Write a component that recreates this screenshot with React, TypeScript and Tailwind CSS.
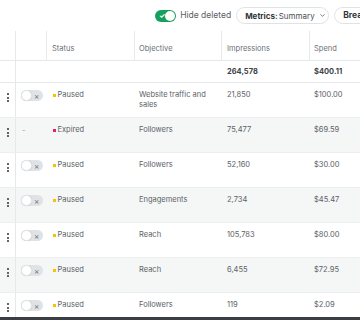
import { ChevronDown } from "lucide-react";

type Row = {
  status: "Paused" | "Expired";
  objective: string;
  impressions: string;
  spend: string;
};

const rows: Row[] = [
  { status: "Paused", objective: "Website traffic and sales", impressions: "21,850", spend: "$100.00" },
  { status: "Expired", objective: "Followers", impressions: "75,477", spend: "$69.59" },
  { status: "Paused", objective: "Followers", impressions: "52,160", spend: "$30.00" },
  { status: "Paused", objective: "Engagements", impressions: "2,734", spend: "$45.47" },
  { status: "Paused", objective: "Reach", impressions: "105,783", spend: "$80.00" },
  { status: "Paused", objective: "Reach", impressions: "6,455", spend: "$72.95" },
  { status: "Paused", objective: "Followers", impressions: "119", spend: "$2.09" },
];

const cols = "grid grid-cols-[16px_31px_88px_87px_88px_110px]";

function Kebab() {
  return (
    <div className="flex flex-col items-center gap-[1.5px] pt-[2px]">
      <span className="w-[2px] h-[2px] rounded-full bg-[#2f3336]" />
      <span className="w-[2px] h-[2px] rounded-full bg-[#2f3336]" />
      <span className="w-[2px] h-[2px] rounded-full bg-[#2f3336]" />
    </div>
  );
}

function OffToggle() {
  return (
    <div className="relative w-[22px] h-[11px] rounded-full bg-[#dfe3e6] flex items-center">
      <span className="w-[11px] h-[11px] rounded-full bg-white border border-[#e3e6e8] shadow-[0_0_1px_rgba(0,0,0,0.15)]" />
      <span className="ml-[2px] text-[8px] leading-none text-[#6b7277]">×</span>
    </div>
  );
}

export default function App() {
  return (
    <div
      className="w-[360px] h-[320px] overflow-hidden bg-white flex flex-col text-[#536471]"
      style={{ fontFamily: "Inter, 'Liberation Sans', sans-serif" }}
    >
      <div className="h-[31px] shrink-0 flex items-center pl-[155px] gap-[4px] whitespace-nowrap">
        <div className="w-[22px] h-[12px] rounded-full bg-[#17a05d] flex items-center justify-between px-[1px]">
          <span className="text-white text-[7px] leading-none pl-[3px] font-bold">✓</span>
          <span className="w-[10px] h-[10px] rounded-full bg-white" />
        </div>
        <span className="text-[8.5px] text-[#5b6166]">Hide deleted</span>
        <div className="ml-[1px] h-[17px] w-[93px] shrink-0 rounded-full border border-[#dfe3e6] flex items-center pl-[8px] gap-[1px] text-[8px]">
          <span className="font-bold text-[#2f3336]">Metrics:</span>
          <span className="text-[#4a4f54]">Summary</span>
          <ChevronDown className="w-[7px] h-[7px] ml-[3px] text-[#4a4f54]" strokeWidth={2.5} />
        </div>
        <div className="ml-[1px] h-[17px] w-[80px] shrink-0 rounded-full border border-[#dfe3e6] flex items-center pl-[8px] text-[8.5px] font-bold text-[#2f3336]">
          Breakdown
        </div>
      </div>

      <div className="flex-1 overflow-hidden flex flex-col">
        <div className={`${cols} h-[30px] shrink-0 border-b border-[#e6e9eb] text-[7.5px] text-[#687076]`}>
          <div className="border-r border-[#e6e9eb]" />
          <div className="border-r border-[#e6e9eb]" />
          <div className="border-r border-[#e6e9eb] flex items-end pb-[6px] pl-[5px]">Status</div>
          <div className="border-r border-[#e6e9eb] flex items-end pb-[6px] pl-[4px]">Objective</div>
          <div className="border-r border-[#e6e9eb] flex items-end pb-[6px] pl-[5px]">Impressions</div>
          <div className="flex items-end pb-[6px] pl-[4px]">Spend</div>
        </div>

        <div className={`${cols} h-[22px] shrink-0 border-b border-[#e6e9eb] text-[7.5px] font-bold text-[#3d4348]`}>
          <div className="border-r border-[#e6e9eb]" />
          <div />
          <div />
          <div />
          <div className="flex items-center pl-[5px]">264,578</div>
          <div className="flex items-center pl-[4px]">$400.11</div>
        </div>

        {rows.map((row, i) => (
          <div
            key={i}
            className={`${cols} h-[35px] shrink-0 border-b border-[#eceef0] text-[7.5px] text-[#5b6166] ${
              i % 2 === 1 ? "bg-[#f5f7f7]" : "bg-white"
            }`}
          >
            <div className="border-r border-[#e6e9eb] flex justify-center pt-[8px]">
              <Kebab />
            </div>
            <div className="pl-[5px] pt-[7px]">
              {row.status === "Expired" ? (
                <span className="pl-[1px] text-[#9aa0a5] leading-[10px]">-</span>
              ) : (
                <OffToggle />
              )}
            </div>
            <div className="pl-[6px] pt-[7px] flex items-start gap-[2px] leading-[10px]">
              <span
                className={`mt-[4px] w-[2.5px] h-[2.5px] shrink-0 ${
                  row.status === "Expired" ? "bg-[#e0245e]" : "bg-[#f5c400]"
                }`}
              />
              {row.status}
            </div>
            <div className="pl-[4px] pr-[10px] pt-[7px] leading-[9.5px]">{row.objective}</div>
            <div className="pl-[5px] pt-[7px] leading-[10px]">{row.impressions}</div>
            <div className="pl-[4px] pt-[7px] leading-[10px]">{row.spend}</div>
          </div>
        ))}
      </div>
      <div className="h-[3px] shrink-0 bg-[#3a3e42]" />
    </div>
  );
}
